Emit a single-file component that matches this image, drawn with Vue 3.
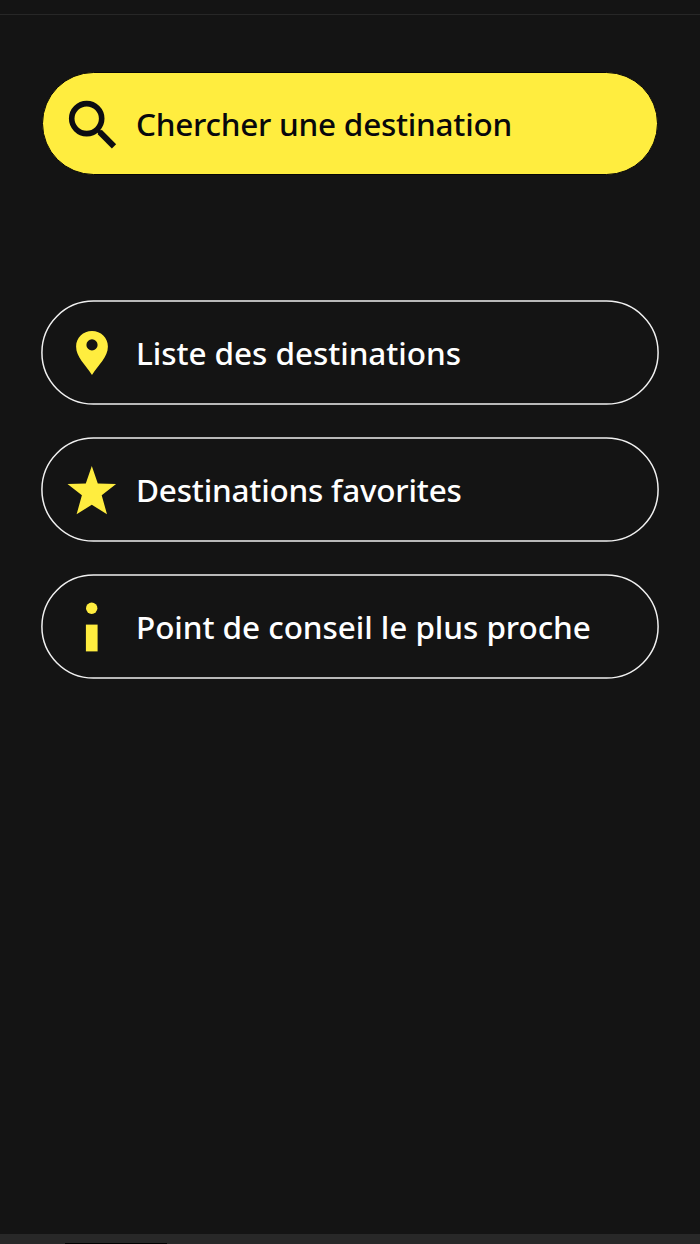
<template>
  <main class="screen">
    <div class="topline"></div>
    <div class="content">
      <button class="pill search">
        <svg class="icon" viewBox="0 0 50 50">
          <circle cx="19.7" cy="19.6" r="15" fill="none" stroke="#0d0d12" stroke-width="5.6" />
          <path d="M29 29.3 34 34.3" fill="none" stroke="#0d0d12" stroke-width="4" />
          <path d="M32.6 32.8 47 47.3" fill="none" stroke="#0d0d12" stroke-width="6" />
        </svg>
        <span class="label">Chercher une destination</span>
      </button>
      <nav class="links">
        <button v-for="link in links" :key="link.id" class="pill" :class="link.id">
          <svg class="outline" viewBox="0 0 618 105">
            <rect x=".9" y="1.1" width="616.2" height="103" rx="51.5" fill="none" stroke="#f0f0f0" stroke-width="1.5" />
          </svg>
          <svg class="icon" viewBox="0 0 50 50" fill="#ffed3f">
            <path v-if="link.id === 'list'" fill-rule="evenodd" d="M25 3.1C16.1 3.1 9.1 9.9 9.1 18.6C9.1 29.4 18.6 36.8 25 47.1C31.4 36.8 40.9 29.4 40.9 18.6C40.9 9.9 33.9 3.1 25 3.1ZM25 11.3A5.6 5.6 0 1 1 25 22.5A5.6 5.6 0 1 1 25 11.3Z" />
            <path v-else-if="link.id === 'favorites'" d="M24.8 1 30.8 18.5 49.1 19 34.7 30.3 40 49.3 24.8 39.7 9.6 49.3 14.9 30.3.5 19 18.8 18.5Z" />
            <g v-else>
              <circle cx="24.7" cy="6.2" r="5.7" />
              <path d="M18.9 22.6H30.6V49.4H18.9Z" />
            </g>
          </svg>
          <span class="label">{{ link.label }}</span>
        </button>
      </nav>
    </div>
    <footer class="bottom">
      <div class="handle"></div>
    </footer>
  </main>
</template>

<script setup>
const links = [
  { id: 'list', label: 'Liste des destinations' },
  { id: 'favorites', label: 'Destinations favorites' },
  { id: 'nearest', label: 'Point de conseil le plus proche' },
]
</script>

<style>
body {
  margin: 0;
  background: #141414;
}
</style>

<style scoped>
.screen {
  display: flex;
  flex-direction: column;
  height: 1244px;
  overflow: hidden;
  background: #141414;
}
.topline {
  height: 14px;
  border-bottom: 1px solid #272727;
}
.content {
  flex: 1;
  padding: 57px 41px 0;
}
.pill {
  position: relative;
  display: flex;
  align-items: center;
  width: 100%;
  height: 105px;
  padding: 0 0 0 26px;
  box-sizing: border-box;
  border: 0;
  background: transparent;
  color: #fff;
  font: 500 31.5px/42px "Noto Sans", "Open Sans", sans-serif;
  letter-spacing: -0.06px;
  text-align: left;
}
.search {
  width: auto;
  min-width: 616px;
  height: 103px;
  margin: 0 1px;
  padding-left: 24px;
  border: 1px solid #060606;
  border-radius: 52px;
  background: #ffed3f;
  color: #08080c;
  letter-spacing: -0.25px;
}
.favorites {
  letter-spacing: -0.21px;
}
.outline {
  position: absolute;
  inset: 0;
  width: 100%;
  height: 100%;
}
.icon {
  flex: none;
  width: 50px;
  height: 50px;
}
.label {
  margin: 1px 0 0 19px;
  white-space: nowrap;
}
.links {
  display: flex;
  flex-direction: column;
  gap: 32px;
  margin-top: 125px;
}
.bottom {
  height: 10px;
  background: #282828;
}
.handle {
  width: 102px;
  height: 1px;
  margin: 9px 0 0 65px;
  background: #000;
}
</style>
